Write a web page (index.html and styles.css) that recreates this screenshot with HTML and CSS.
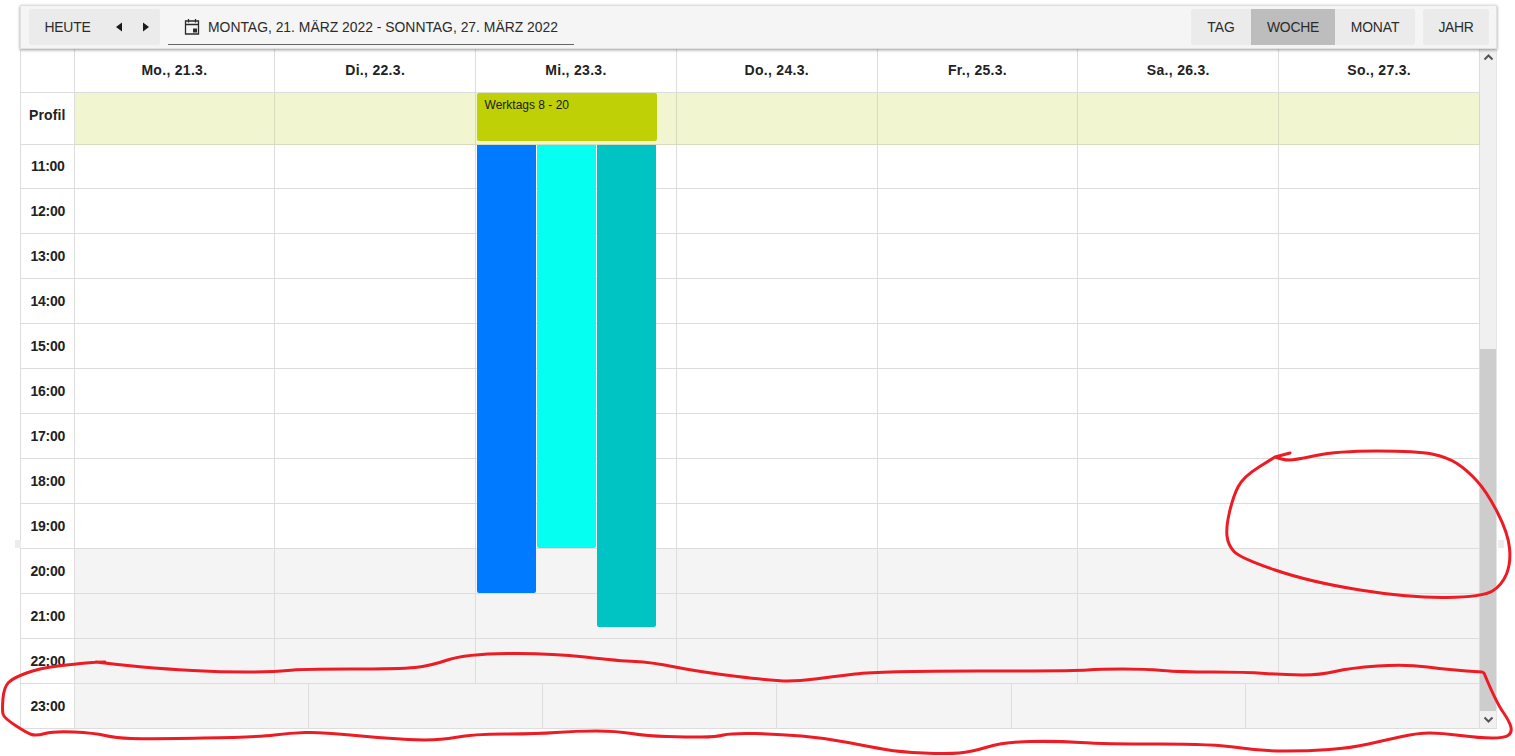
FILE: index.html
```html
<!DOCTYPE html>
<html lang="de">
<head>
<meta charset="utf-8">
<title>Wochenplan</title>
<link rel="stylesheet" href="styles.css">
</head>
<body>
<div class="scheduler">
  <div class="toolbar">
    <div class="btn-group">
      <span class="btn btn-today">HEUTE</span>
      <span class="nav-btn"><svg width="8" height="10" viewBox="0 0 8 10"><path d="M6 .5v9L0 5z" fill="#1a1a1a"/></svg></span>
      <span class="nav-btn"><svg width="8" height="10" viewBox="0 0 8 10"><path d="M0 .5v9L6 5z" fill="#1a1a1a"/></svg></span>
    </div>
    <div class="date-range">
      <svg class="cal" width="16" height="17" viewBox="0 0 16 17"><path d="M1.500 3h13v13h-13zM1.500 6.500h13M4.500 1v3.500M11.500 1v3.500" fill="none" stroke="#2b2b2b" stroke-width="1.300"/><rect x="9" y="10.500" width="4" height="4" fill="#2b2b2b"/></svg>
      <span>MONTAG, 21. MÄRZ 2022 - SONNTAG, 27. MÄRZ 2022</span>
    </div>
    <div class="spacer"></div>
    <div class="btn-group views">
      <span class="btn btn-day">TAG</span>
      <span class="btn btn-week active">WOCHE</span>
      <span class="btn btn-month">MONAT</span>
    </div>
    <div class="btn-group">
      <span class="btn btn-year">JAHR</span>
    </div>
  </div>

  <div class="body">
    <div class="grid">
      <div class="row row-head">
        <div class="cell label"></div>
        <div class="cell day">Mo., 21.3.</div><div class="cell day">Di., 22.3.</div><div class="cell day">Mi., 23.3.</div><div class="cell day">Do., 24.3.</div><div class="cell day">Fr., 25.3.</div><div class="cell day">Sa., 26.3.</div><div class="cell day">So., 27.3.</div>
      </div>
      <div class="row row-profile">
        <div class="cell label label-profile">Profil</div>
        <div class="cell green"></div><div class="cell green"></div>
        <div class="cell green slot"><div class="profile-event">Werktags 8 - 20</div></div>
        <div class="cell green"></div><div class="cell green"></div><div class="cell green"></div><div class="cell green"></div>
      </div>
      <div class="hours">
        <div class="row row-first">
          <div class="cell label hour">11:00</div>
          <div class="cell"></div><div class="cell"></div><div class="cell"></div><div class="cell"></div><div class="cell"></div><div class="cell"></div><div class="cell"></div>
        </div>
        <div class="row"><div class="cell label hour">12:00</div><div class="cell"></div><div class="cell"></div><div class="cell"></div><div class="cell"></div><div class="cell"></div><div class="cell"></div><div class="cell"></div></div>
        <div class="row"><div class="cell label hour">13:00</div><div class="cell"></div><div class="cell"></div><div class="cell"></div><div class="cell"></div><div class="cell"></div><div class="cell"></div><div class="cell"></div></div>
        <div class="row"><div class="cell label hour">14:00</div><div class="cell"></div><div class="cell"></div><div class="cell"></div><div class="cell"></div><div class="cell"></div><div class="cell"></div><div class="cell"></div></div>
        <div class="row"><div class="cell label hour">15:00</div><div class="cell"></div><div class="cell"></div><div class="cell"></div><div class="cell"></div><div class="cell"></div><div class="cell"></div><div class="cell"></div></div>
        <div class="row"><div class="cell label hour">16:00</div><div class="cell"></div><div class="cell"></div><div class="cell"></div><div class="cell"></div><div class="cell"></div><div class="cell"></div><div class="cell"></div></div>
        <div class="row"><div class="cell label hour">17:00</div><div class="cell"></div><div class="cell"></div><div class="cell"></div><div class="cell"></div><div class="cell"></div><div class="cell"></div><div class="cell"></div></div>
        <div class="row"><div class="cell label hour">18:00</div><div class="cell"></div><div class="cell"></div><div class="cell"></div><div class="cell"></div><div class="cell"></div><div class="cell"></div><div class="cell"></div></div>
        <div class="row"><div class="cell label hour">19:00</div><div class="cell"></div><div class="cell"></div><div class="cell"></div><div class="cell"></div><div class="cell"></div><div class="cell"></div><div class="cell off"></div></div>
        <div class="row"><div class="cell label hour">20:00</div><div class="cell off"></div><div class="cell off"></div><div class="cell off"></div><div class="cell off"></div><div class="cell off"></div><div class="cell off"></div><div class="cell off"></div></div>
        <div class="row"><div class="cell label hour">21:00</div><div class="cell off"></div><div class="cell off"></div><div class="cell off"></div><div class="cell off"></div><div class="cell off"></div><div class="cell off"></div><div class="cell off"></div></div>
        <div class="row"><div class="cell label hour">22:00</div><div class="cell off"></div><div class="cell off"></div><div class="cell off"></div><div class="cell off"></div><div class="cell off"></div><div class="cell off"></div><div class="cell off"></div></div>
        <div class="row row-six"><div class="cell label hour">23:00</div><div class="cell off"></div><div class="cell off"></div><div class="cell off"></div><div class="cell off"></div><div class="cell off"></div><div class="cell off"></div></div>
        <div class="events">
          <div class="event ev-blue"></div>
          <div class="event ev-cyan"></div>
          <div class="event ev-teal"></div>
        </div>
      </div>
    </div>
    <div class="scrollbar">
      <div class="arrow"><svg width="11" height="7" viewBox="0 0 11 7"><path d="M1.500 5.500L5.500 1.500l4 4" fill="none" stroke="#555" stroke-width="2"/></svg></div>
      <div class="track"></div>
      <div class="thumb"></div>
      <div class="arrow"><svg width="11" height="7" viewBox="0 0 11 7"><path d="M1.500 1.500l4 4 4-4" fill="none" stroke="#555" stroke-width="2"/></svg></div>
    </div>
  </div>
</div>
<div class="handle handle-left"></div>
<div class="handle handle-right"></div>
<svg class="ink" width="1515" height="756" viewBox="0 0 1515 756">
  <path d="M96 662Q120 665 142.500 667Q165 669 192.500 670.500Q220 672 247.500 672Q275 672 287.500 670.500Q300 669 350 669Q400 669 415 667.500Q430 666 447.500 660Q465 654 507.500 653.500Q550 653 585 657Q620 661 635 661.500Q650 662 675 667Q700 672 737.500 676.500Q775 681 787.500 681Q800 681 815 679Q830 677 855 674Q880 671 977.500 671Q1075 671 1087.500 670Q1100 669 1122.500 669Q1145 669 1162.500 670.500Q1180 672 1212.500 672Q1245 672 1265 673.500Q1285 675 1302.500 675Q1320 675 1335 671.500Q1350 668 1377.500 666Q1405 664 1427.500 667Q1450 670 1482 672L1484 673Q1496 702 1503 712Q1510 722 1511 727.500Q1512 733 1508 735.500Q1504 738 1492 738Q1480 738 1460.500 735.500Q1441 733 1429.500 733Q1418 733 1402 736.500Q1386 740 1368.500 744Q1351 748 1329.500 749.500Q1308 751 1284.500 751Q1261 751 1237.500 747.500Q1214 744 1159 744Q1104 744 1080.500 742.500Q1057 741 1030.500 741.500Q1004 742 987.500 747Q971 752 959 753Q947 754 923.500 753Q900 752 885.500 749.500Q871 747 848 742.500Q825 738 801.500 736Q778 734 754.500 733.500Q731 733 723.500 735Q716 737 701.500 737Q687 737 667 736.500Q647 736 631.500 733.500Q616 731 596 731Q576 731 556 732.500Q536 734 504.500 734Q473 734 455 737.500Q437 741 408 739.500Q379 738 350 735Q321 732 305.500 732.500Q290 733 274.500 735Q259 737 203 738Q147 739 131.500 738.500Q116 738 105 735.500Q94 733 74 732Q54 731 45 733.500Q36 736 31.500 734.500Q27 733 15.500 725.500Q4 718 3 714Q2 710 3 698.500Q4 687 8.500 682.500Q13 678 26.500 673Q40 668 58 666Q76 664 86 663Q96 662 105 662"/>
  <path d="M1290 453L1275 457Q1283 460 1289 460Q1295 460 1316 455.500Q1337 451 1377 451Q1417 451 1432 454Q1447 457 1457 463.500Q1467 470 1477 481Q1487 492 1497.500 512.500Q1508 533 1509.500 548Q1511 563 1506.500 574Q1502 585 1492.500 591Q1483 597 1446.500 597.500Q1410 598 1360 590Q1310 582 1275 570Q1240 558 1234 551.500Q1228 545 1227 536Q1226 527 1229.500 512Q1233 497 1238 487Q1243 477 1259 467L1275 457"/>
</svg>
</body>
</html>
```
FILE: styles.css
```css
* { box-sizing: border-box; }
html, body { margin: 0; height: 100%; overflow: hidden; background: #fff; }
body { padding: 5px 18px 0 20px; font-family: "Liberation Sans", Arial, sans-serif; font-size: 13.900px; color: #2b2b2b; }

.scheduler { width: 1477px; }

.toolbar {
  height: 44px;
  display: flex;
  align-items: center;
  padding: 3px 7px 3px 8px;
  background: #f5f5f5;
  border: 1px solid #e0e0e0;
  box-shadow: 0 1px 3px rgba(0,0,0,.4);
  position: relative;
  z-index: 2;
}
.btn-group { display: flex; height: 36px; background: #ebebeb; border-radius: 2px; }
.btn { display: flex; align-items: center; justify-content: center; }
.btn-today { width: 77px; letter-spacing: -.2px; }
.btn-day { width: 60px; }
.btn-week { width: 84px; letter-spacing: -.2px; }
.btn-month { width: 80px; letter-spacing: -.1px; }
.btn-year { width: 66px; letter-spacing: -.3px; }
.btn.active { background: #bdbdbd; }
.nav-btn { display: flex; align-items: center; justify-content: center; width: 27px; }
.date-range {
  display: flex; align-items: center; gap: 8px;
  width: 406px; height: 36px; margin-left: 8px; padding-left: 16px;
  border-bottom: 1px solid #666;
}
.cal { flex: none; }
.spacer { flex: 1; }
.views { margin-right: 8px; }

.body { display: flex; }
.grid { flex: 1; border-left: 1px solid #ddd; }
.row { display: grid; grid-template-columns: 53.500px repeat(7, 1fr); height: 45px; }
.row-head { height: 44px; }
.row-profile { height: 52px; }
.row-first { height: 44px; }
.row-six { grid-template-columns: 53.500px repeat(6, 1fr); }
.cell { border-right: 1px solid #ddd; border-bottom: 1px solid #ddd; }
.label, .day { display: flex; align-items: center; justify-content: center; font-weight: 700; color: #222; font-size: 14px; }
.day { letter-spacing: .3px; padding-bottom: 1px; }
.hour { letter-spacing: -.3px; padding-bottom: 1px; padding-left: 1px; }
.label-profile { padding-bottom: 8px; letter-spacing: .1px; }
.off { background: #f4f4f4; }
.green { background: #f1f5d0; border-color: #d8dcbc; }
.slot { padding: 0 19px 0 1px; }
.profile-event {
  height: 48px; background: #bfd006; border-radius: 2px;
  padding: 5px 8px 5px 7.500px; font-size: 12px; color: #1a1a1a;
}

.hours { position: relative; }
.events {
  position: absolute; top: 0; left: 456px;
  display: flex; gap: 1px; width: 179px;
}
.event { flex: 1; border-radius: 0 0 2px 2px; }
.ev-blue { height: 448px; background: #007bff; }
.ev-cyan { height: 403px; background: #05fff0; }
.ev-teal { height: 482px; background: #00c4c4; }

.scrollbar { width: 17px; background: #f0f0f0; display: flex; flex-direction: column; position: relative; height: 680px; border-right: 1px solid #e4e4e4; border-bottom: 1px solid #ddd; }
.arrow { height: 17px; display: flex; align-items: center; justify-content: center; flex: none; position: relative; z-index: 1; }
.track { height: 283px; }
.thumb { flex: 1; background: #cdcdcd; }

.handle { position: absolute; top: 540px; width: 6px; height: 8px; background: #ececec; }
.handle-left { left: 15px; }
.handle-right { left: 1498px; }

.ink { position: absolute; left: 0; top: 0; pointer-events: none; z-index: 5; }
.ink path { fill: none; stroke: #ed1c24; stroke-width: 3; stroke-linejoin: round; stroke-linecap: round; }
```
